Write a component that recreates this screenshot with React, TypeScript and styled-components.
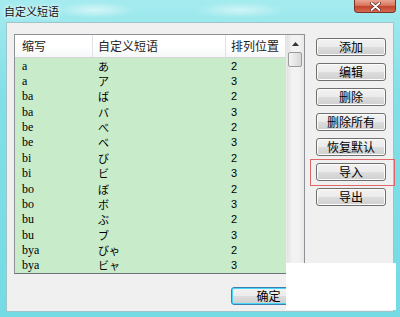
import React from 'react'
import styled, { createGlobalStyle } from 'styled-components'

interface IPhrase {
    abbr: string,
    phrase: string,
    pos: number
}

const phrases: IPhrase[] = [
    { abbr: 'a', phrase: 'あ', pos: 2 },
    { abbr: 'a', phrase: 'ア', pos: 3 },
    { abbr: 'ba', phrase: 'ば', pos: 2 },
    { abbr: 'ba', phrase: 'バ', pos: 3 },
    { abbr: 'be', phrase: 'べ', pos: 2 },
    { abbr: 'be', phrase: 'ベ', pos: 3 },
    { abbr: 'bi', phrase: 'び', pos: 2 },
    { abbr: 'bi', phrase: 'ビ', pos: 3 },
    { abbr: 'bo', phrase: 'ぼ', pos: 2 },
    { abbr: 'bo', phrase: 'ボ', pos: 3 },
    { abbr: 'bu', phrase: 'ぶ', pos: 2 },
    { abbr: 'bu', phrase: 'ブ', pos: 3 },
    { abbr: 'bya', phrase: 'びゃ', pos: 2 },
    { abbr: 'bya', phrase: 'ビャ', pos: 3 },
]

const sideButtons = ['添加', '编辑', '删除', '删除所有', '恢复默认', '导入', '导出']

const GlobalStyle = createGlobalStyle`
    body {
        margin: 0;
        overflow: hidden;
        font-family: "Noto Sans CJK SC", sans-serif;
    }
`

const Window = styled.div`
    position: relative;
    width: 400px;
    height: 317px;
    box-sizing: border-box;
    display: flex;
    flex-direction: column;
    background:
        radial-gradient(ellipse 40px 8px at 95px 10px, rgba(255,255,255,0.55), rgba(255,255,255,0)),
        radial-gradient(ellipse 45px 8px at 240px 10px, rgba(255,255,255,0.5), rgba(255,255,255,0)),
        linear-gradient(to bottom, #a4ebef 0%, #82dfe7 30%, #74dbe4 100%);
`

const TitleBar = styled.div`
    height: 22px;
    display: flex;
    justify-content: space-between;
    align-items: flex-start;
    padding-left: 4px;
`

const Title = styled.span`
    align-self: center;
    font-size: 11px;
    color: #111;
    text-shadow: 0 0 6px #fff, 0 0 3px #fff;
`

const CloseButton = styled.div`
    width: 42px;
    height: 13px;
    margin-right: 4px;
    box-sizing: border-box;
    border: 1px solid #7a3326;
    border-top: none;
    border-radius: 0 0 4px 4px;
    background: linear-gradient(to bottom, #e9a593 0%, #d8755e 45%, #c2452d 55%, #d66b4f 100%);
    display: flex;
    justify-content: center;
    align-items: center;
`

const Client = styled.div`
    flex: 1;
    margin: 0 6px 5px 6px;
    background: #f0f0f0;
    border: 1px solid #9fc4c9;
    padding: 11px 6px 0 7px;
    display: flex;
    flex-direction: column;
`

const MainRow = styled.div`
    display: flex;
    align-items: flex-start;
`

const ListBox = styled.div`
    width: 291px;
    height: 240px;
    box-sizing: border-box;
    border: 1px solid #8e9297;
    border-bottom-color: #6f7378;
    display: flex;
    background: #fff;
    overflow: hidden;
`

const ListBody = styled.div`
    flex: 1;
    display: flex;
    flex-direction: column;
`

const HeaderRow = styled.div`
    height: 22px;
    flex: none;
    display: grid;
    grid-template-columns: 78px 133px 1fr;
    background: linear-gradient(to bottom, #ffffff 0%, #ffffff 50%, #f6f7f8 100%);
    border-bottom: 1px solid #d5d5d5;
`

const HeaderCell = styled.div`
    padding-left: ${(p: { first?: boolean }) => (p.first ? '7px' : '5px')};
    border-right: 1px solid #dfe2e6;
    font-size: 12px;
    line-height: 22px;
    color: #222;
    white-space: nowrap;
`

const Rows = styled.div`
    flex: 1;
    min-height: 0;
    display: flex;
    flex-direction: column;
    background: #c8ebca;
    line-height: 12px;
`

const Row = styled.div`
    flex: 1;
    min-height: 0;
    display: grid;
    grid-template-columns: 78px 133px 1fr;
    align-items: center;
`

const Abbr = styled.span`
    padding-left: 7px;
    font-family: "Liberation Serif", serif;
    font-size: 12px;
    color: #000;
`

const Phrase = styled.span`
    padding-left: 5px;
    font-family: "Noto Sans CJK JP", sans-serif;
    font-size: 11px;
    color: #000;
`

const Pos = styled.span`
    padding-left: 5px;
    font-family: "Liberation Sans", sans-serif;
    font-size: 11px;
    color: #000;
`

const ScrollBar = styled.div`
    width: 17px;
    display: flex;
    flex-direction: column;
    background: linear-gradient(to right, #e3e3e3, #f2f2f2 30%, #f2f2f2 70%, #e8e8e8);
    border-left: 1px solid #eaeaea;
`

const ScrollArrow = styled.div`
    height: 17px;
    display: flex;
    justify-content: center;
    align-items: center;
`

const Thumb = styled.div`
    height: 15px;
    margin: 0 2px 0 1px;
    box-sizing: border-box;
    border: 1px solid #9a9a9a;
    border-radius: 2px;
    background: linear-gradient(to right, #f4f4f4, #e6e6e6 50%, #d8d8d8);
`

const Track = styled.div`
    flex: 1;
`

const ButtonColumn = styled.div`
    margin-left: 11px;
    padding-top: 4px;
    display: flex;
    flex-direction: column;
    gap: 7px;
`

const Button = styled.div<{ highlighted?: boolean, isDefault?: boolean, wide?: boolean }>`
    position: relative;
    width: ${p => (p.wide ? '75px' : '70px')};
    height: 18px;
    box-sizing: border-box;
    border: 1px solid ${p => (p.isDefault ? '#3c7fb1' : '#707070')};
    border-radius: 3px;
    box-shadow: inset 0 0 0 1px ${p => (p.isDefault ? '#48d5fb' : '#fcfcfc')};
    background: linear-gradient(to bottom, #f2f2f2 0%, #ebebeb 50%, #dddddd 51%, #cfcfcf 100%);
    font-size: 12px;
    line-height: 16px;
    text-align: center;
    color: #000;

    &::after {
        content: '';
        display: ${p => (p.highlighted ? 'block' : 'none')};
        position: absolute;
        left: -7px;
        right: -10px;
        top: -5px;
        bottom: -6px;
        border: 1px solid #e06767;
    }
`

const Footer = styled.div`
    margin-top: 13px;
    display: flex;
    justify-content: flex-end;
    gap: 6px;
`

const WhiteOut = styled.div`
    position: absolute;
    left: 286px;
    top: 263px;
    width: 110px;
    height: 47px;
    background: #fff;
`

const Arrow: React.FC<{ down?: boolean }> = ({ down }) => (
    <svg width="7" height="4" viewBox="0 0 7 4">
        <polygon points={down ? '0,0 7,0 3.5,4' : '0,4 7,4 3.5,0'} fill="#333" />
    </svg>
)

const App: React.FC = () => {
    let rows: JSX.Element[] = []

    phrases.forEach((item, i) => {
        rows.push(
            <Row key={i}>
                <Abbr>{item.abbr}</Abbr>
                <Phrase>{item.phrase}</Phrase>
                <Pos>{item.pos}</Pos>
            </Row>
        )
    })

    return (
        <>
            <GlobalStyle />
            <Window>
                <TitleBar>
                    <Title>自定义短语</Title>
                    <CloseButton>
                        <svg width="11" height="9" viewBox="0 0 11 9">
                            <path d="M1.5 1 L9.5 8 M9.5 1 L1.5 8" stroke="#5a1d14" strokeWidth="3.2" strokeLinecap="round" />
                            <path d="M1.5 1 L9.5 8 M9.5 1 L1.5 8" stroke="#fff" strokeWidth="1.8" strokeLinecap="round" />
                        </svg>
                    </CloseButton>
                </TitleBar>
                <Client>
                    <MainRow>
                        <ListBox>
                            <ListBody>
                                <HeaderRow>
                                    <HeaderCell first>缩写</HeaderCell>
                                    <HeaderCell>自定义短语</HeaderCell>
                                    <HeaderCell>排列位置</HeaderCell>
                                </HeaderRow>
                                <Rows>{rows}</Rows>
                            </ListBody>
                            <ScrollBar>
                                <ScrollArrow><Arrow /></ScrollArrow>
                                <Thumb />
                                <Track />
                                <ScrollArrow><Arrow down /></ScrollArrow>
                            </ScrollBar>
                        </ListBox>
                        <ButtonColumn>
                            {sideButtons.map(label => (
                                <Button key={label} highlighted={label === '导入'}>{label}</Button>
                            ))}
                        </ButtonColumn>
                    </MainRow>
                    <Footer>
                        <Button wide isDefault>确定</Button>
                        <Button wide>取消</Button>
                    </Footer>
                </Client>
                <WhiteOut />
            </Window>
        </>
    )
}

export default App
